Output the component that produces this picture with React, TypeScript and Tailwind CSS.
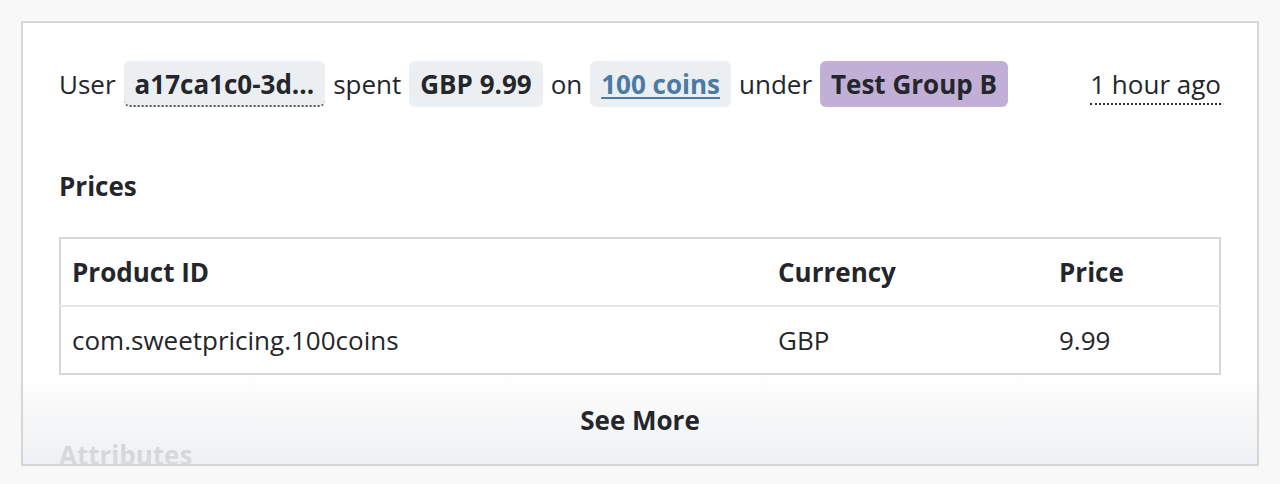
const prices = [
  { productId: "com.sweetpricing.100coins", currency: "GBP", price: "9.99" },
];

export default function App() {
  return (
    <div
      className="min-h-[484px] bg-[#f8f8f8] px-[21px] pt-[21px] text-[#24262b]"
      style={{ fontFamily: '"Open Sans", "Liberation Sans", sans-serif' }}
    >
      <div className="relative h-[445px] overflow-hidden border-2 border-[#d6d6d6] bg-white px-[36px] pt-[38px]">
        {/* event summary */}
        <div className="flex items-start justify-between text-[26px] leading-[36px]">
          <div className="flex items-center gap-[8px]">
            <span>User</span>
            <span className="rounded-[6px] border-b-2 border-dotted border-[#555] bg-[#eceff1] px-[11px] pt-[5px] pb-[3px] font-bold">
              a17ca1c0-3d...
            </span>
            <span>spent</span>
            <span className="rounded-[6px] bg-[#eceff1] px-[11px] py-[5px] font-bold">GBP 9.99</span>
            <span>on</span>
            <span className="rounded-[6px] bg-[#eceff1] px-[11px] py-[5px] font-bold">
              <a href="#" className="text-[#4a7aa5] underline underline-offset-[3px]">
                100 coins
              </a>
            </span>
            <span>under</span>
            <span className="rounded-[6px] bg-[#c1afd6] px-[11px] py-[5px] font-bold">Test Group B</span>
          </div>
          <span className="mt-[5px] border-b-2 border-dotted border-[#333] pb-[1px] leading-[36px]">1 hour ago</span>
        </div>

        <h2 className="mt-[61px] text-[26px] font-bold leading-[36px]">Prices</h2>

        <table className="mt-[33px] w-full table-fixed border-collapse border-2 border-[#d6d6d6] text-left text-[26px]">
          <colgroup>
            <col className="w-[707px]" />
            <col className="w-[281px]" />
            <col />
          </colgroup>
          <thead>
            <tr className="h-[68px] border-b-2 border-[#e6e6e6]">
              <th className="px-[11px] font-bold">Product ID</th>
              <th className="px-[11px] font-bold">Currency</th>
              <th className="px-[11px] font-bold">Price</th>
            </tr>
          </thead>
          <tbody>
            {prices.map((p) => (
              <tr key={p.productId} className="h-[68px]">
                <td className="px-[11px]">{p.productId}</td>
                <td className="px-[11px]">{p.currency}</td>
                <td className="px-[11px]">{p.price}</td>
              </tr>
            ))}
          </tbody>
        </table>

        <h2 className="mt-[62px] text-[26px] font-bold leading-[36px]">Attributes</h2>

        {/* fade + see more */}
        <div className="absolute inset-x-0 bottom-0 flex h-[90px] items-start justify-center bg-gradient-to-b from-white/0 via-[#f4f5f6]/80 to-[#eceff2]/90 pt-[28px]">
          <button className="text-[26px] font-bold leading-[36px] text-[#24262b]">See More</button>
        </div>
      </div>
    </div>
  );
}
